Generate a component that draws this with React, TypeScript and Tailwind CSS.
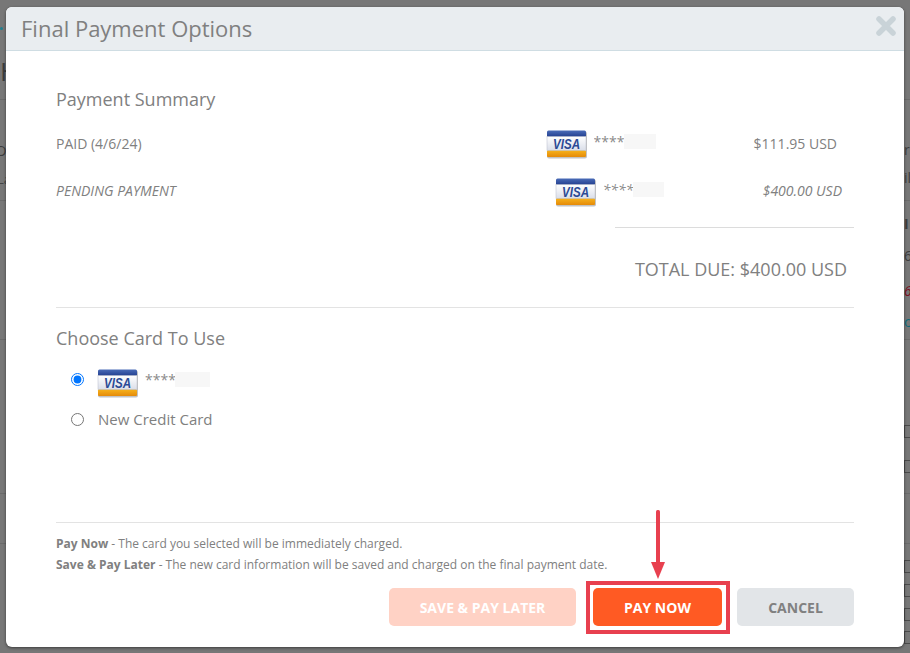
const F = "font-['Open_Sans',sans-serif]";

function Visa({ className = "" }: { className?: string }) {
  return (
    <svg width="42" height="29" viewBox="0 0 42 29" className={className}>
      <defs>
        <linearGradient id="vt" x1="0" y1="0" x2="0" y2="1"><stop offset="0" stopColor="#4a6cb8" /><stop offset="1" stopColor="#1f3a8a" /></linearGradient>
        <linearGradient id="vm" x1="0" y1="0" x2="0" y2="1"><stop offset="0" stopColor="#ffffff" /><stop offset="1" stopColor="#d9dde8" /></linearGradient>
        <linearGradient id="vb" x1="0" y1="0" x2="0" y2="1"><stop offset="0" stopColor="#f6b21c" /><stop offset="1" stopColor="#e58a08" /></linearGradient>
      </defs>
      <rect x="1" y="1.5" width="40" height="27" rx="2" fill="#8f8f8f" opacity="0.55" />
      <rect x="1" y="0.5" width="39" height="7" rx="1.5" fill="url(#vt)" />
      <rect x="1" y="6.5" width="39" height="14.5" fill="url(#vm)" />
      <rect x="1" y="20.5" width="39" height="6.5" rx="1" fill="url(#vb)" />
      <rect x="1" y="6.5" width="39" height="14" fill="none" stroke="#b9bdc9" strokeWidth="0.5" />
      <text x="20.5" y="19" textAnchor="middle" textLength="27" lengthAdjust="spacingAndGlyphs" fontFamily="'Liberation Sans',sans-serif" fontSize="14" fontWeight="700" fontStyle="italic" fill="#2b4a95">VISA</text>
    </svg>
  );
}

function Stars({ w, up }: { w: string; up: string }) {
  return (
    <span className={`flex items-center text-[14px] leading-[15px] text-[#8a8a8a] ${up}`}>
      <span className="w-[30px] overflow-hidden">****</span>
      <span className={`${w} h-[15px] bg-[#f7f7f7]`} />
    </span>
  );
}

function Tick({ top }: { top: string }) {
  return <div className={`absolute left-[904px] h-[13px] w-[7px] border border-[#4a4a4a] ${top}`} />;
}

export default function App() {
  return (
    <div className={`${F} relative h-[653px] w-[910px] overflow-hidden bg-[#777777] text-[#808080]`}>
      <div className="absolute left-0 top-[99px] h-px w-full bg-[#6a6a6a]" />
      <div className="absolute left-0 top-[200px] h-px w-full bg-[#6a6a6a]" />
      <div className="absolute left-0 top-[339px] h-px w-full bg-[#6a6a6a]" />
      <div className="absolute left-0 top-[493px] h-px w-full bg-[#6a6a6a]" />
      <div className="absolute left-0 top-[543px] h-px w-full bg-[#6a6a6a]" />
      <div className="absolute left-0 top-[27px] h-[3px] w-[3px] rounded-full bg-[#1f7f8f]" />
      <div className="absolute left-0 top-[54px] text-[26px] leading-[34px] text-[#3d3d3d]">H</div>
      <div className="absolute left-[-5px] top-[140px] text-[15px] leading-[20px] text-[#3d3d3d]">O</div>
      <div className="absolute left-[-3px] top-[170px] text-[13px] leading-[18px] text-[#444444]">La</div>
      <div className="absolute left-[904px] top-[140px] text-[14px] leading-[20px] text-[#3d3d3d]">r</div>
      <div className="absolute left-[904px] top-[168px] text-[14px] leading-[20px] text-[#3d3d3d]">il</div>
      <div className="absolute left-[904px] top-[214px] text-[14px] font-bold leading-[20px] text-[#3d3d3d]">I</div>
      <div className="absolute left-[904px] top-[246px] text-[14px] leading-[20px] text-[#3d3d3d]">6</div>
      <div className="absolute left-[904px] top-[281px] text-[14px] italic leading-[20px] text-[#7a1020]">6</div>
      <div className="absolute left-[904px] top-[312px] text-[14px] leading-[20px] text-[#0e6a7a]">c</div>
      <Tick top="top-[425px]" />
      <Tick top="top-[460px]" />
      <Tick top="top-[560px]" />
      <Tick top="top-[584px]" />
      <Tick top="top-[608px]" />
      <Tick top="top-[631px]" />
      <div className="relative pl-[6px] pt-[7px]">
        <div className="flex h-[640px] w-[898px] flex-col overflow-hidden rounded-[6px] bg-white shadow-[0_1px_3px_rgba(0,0,0,0.5)]">
          <div className="flex h-[44px] shrink-0 items-center justify-between border-b border-[#cfdde3] bg-[#e9edf0] pl-[15px] pr-[8px]">
            <h1 className="mb-[2px] text-[22px] leading-[28px] text-[#808080]">Final Payment Options</h1>
            <svg width="20" height="20" viewBox="0 0 20 20" className="mb-[5px]">
              <path d="M3 3 L17 17 M17 3 L3 17" stroke="#c9d3d8" strokeWidth="5.5" strokeLinecap="round" />
            </svg>
          </div>
          <div className="flex flex-1 flex-col px-[50px]">
            <h2 className="mt-[36px] text-[18px] leading-[24px]">Payment Summary</h2>
            <div className="mt-[18px] flex h-[30px] items-center pr-[17px] text-[14px]">
              <span className="mb-[2px] flex-1">PAID (4/6/24)</span>
              <Visa />
              <span className="ml-[6px] mr-[98px]"><Stars w="w-[32px]" up="mb-[6px]" /></span>
              <span className="mb-[2px]">$111.95 USD</span>
            </div>
            <div className="mt-[18px] flex h-[30px] items-center pr-[12px] text-[14px] italic">
              <span className="mb-[3px] flex-1">PENDING PAYMENT</span>
              <Visa />
              <span className="ml-[6px] mr-[99px]"><Stars w="w-[31px]" up="mb-[6px]" /></span>
              <span className="mb-[3px]">$400.00 USD</span>
            </div>
            <div className="ml-auto mt-[20px] h-px w-[239px] bg-[#dcdcdc]" />
            <div className="mt-[29px] pr-[7px] text-right text-[18px] leading-[24px]">TOTAL DUE: $400.00 USD</div>
            <div className="mt-[26px] h-px bg-[#e3e3e3]" />
            <h2 className="mt-[18px] text-[18px] leading-[24px]">Choose Card To Use</h2>
            <div className="mt-[18px] flex h-[30px] items-center">
              <input type="radio" defaultChecked className="mb-[8px] ml-[15px] h-[13px] w-[13px] accent-[#0075ff]" />
              <Visa className="ml-[13px]" />
              <span className="ml-[6px]"><Stars w="w-[35px]" up="mb-[8px]" /></span>
            </div>
            <div className="mt-[9px] flex h-[24px] items-center">
              <input type="radio" className="ml-[15px] h-[13px] w-[13px]" />
              <span className="ml-[14px] text-[15px]">New Credit Card</span>
            </div>
            <div className="mt-[91px] h-px bg-[#e3e3e3]" />
            <p className="mt-[10px] text-[12px] leading-[21px]"><b>Pay Now</b> - The card you selected will be immediately charged.</p>
            <p className="text-[12px] leading-[21px]"><b>Save &amp; Pay Later</b> - The new card information will be saved and charged on the final payment date.</p>
            <div className="mt-[6px] flex items-start justify-end">
              <button className="mt-[7px] flex h-[38px] w-[187px] items-center justify-center rounded-[5px] bg-[#ffd2c5] text-[14px] font-bold text-white">SAVE &amp; PAY LATER</button>
              <div className="ml-[10px] border-[4px] border-[#e8404f] pb-[4px] pl-[3px] pr-[4px] pt-[3px]">
                <button className="flex h-[38px] w-[129px] items-center justify-center rounded-[5px] bg-[#ff5a23] text-[14px] font-bold text-white">PAY NOW</button>
              </div>
              <button className="ml-[7px] mt-[7px] flex h-[38px] w-[117px] items-center justify-center rounded-[5px] bg-[#e2e5e8] text-[14px] font-bold text-[#808080]">CANCEL</button>
            </div>
          </div>
        </div>
      </div>
      <svg width="16" height="70" viewBox="0 0 16 70" className="absolute left-[650px] top-[510px]">
        <rect x="6" y="0" width="4" height="56" rx="1.5" fill="#e8404f" />
        <path d="M1 52 H15 L8 69 Z" fill="#e8404f" />
      </svg>
    </div>
  );
}
